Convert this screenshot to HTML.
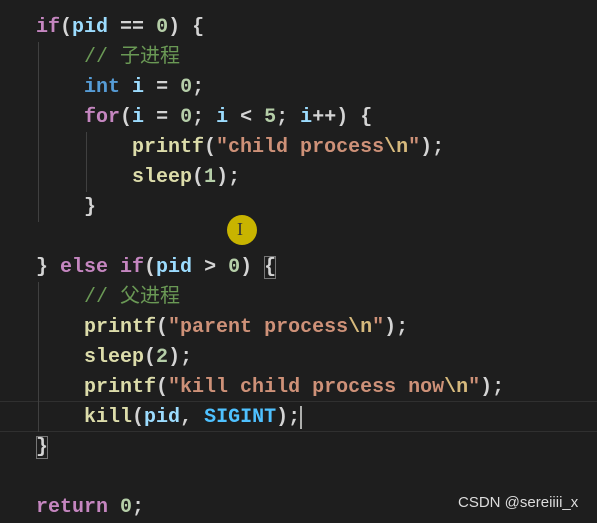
<!DOCTYPE html>
<html><head><style>
body{margin:0;width:597px;height:522px;background:#1e1e1e;overflow:hidden;position:relative;font-family:"Liberation Mono","Noto Sans CJK SC",monospace;font-size:20px;font-weight:bold}
.l{position:absolute;left:36px;height:30px;line-height:30px;white-space:pre;color:#d4d4d4;margin-top:2px}
.k{color:#c586c0}.t{color:#569cd6}.v{color:#9cdcfe}.n{color:#b5cea8}.f{color:#dcdcaa}.s{color:#ce9178}.e{color:#d7ba7d}.c{color:#6a9955;font-weight:normal}.m{color:#4fc1ff}
.g{position:absolute;width:1px;background:#404040}
</style></head><body>
<div style="position:absolute;left:0;right:0;top:401px;height:29px;border-top:1px solid #303030;border-bottom:1px solid #303030"></div>
<div class="g" style="left:38px;top:42px;height:180px"></div>
<div class="g" style="left:86px;top:132px;height:60px"></div>
<div class="g" style="left:38px;top:282px;height:150px"></div>
<div class="l" style="top:11px"><span class="k">if</span>(<span class="v">pid</span> == <span class="n">0</span>) {</div>
<div class="l" style="top:41px">    <span class="c">// 子进程</span></div>
<div class="l" style="top:71px">    <span class="t">int</span> <span class="v">i</span> = <span class="n">0</span>;</div>
<div class="l" style="top:101px">    <span class="k">for</span>(<span class="v">i</span> = <span class="n">0</span>; <span class="v">i</span> &lt; <span class="n">5</span>; <span class="v">i</span>++) {</div>
<div class="l" style="top:131px">        <span class="f">printf</span>(<span class="s">"child process</span><span class="e">\n</span><span class="s">"</span>);</div>
<div class="l" style="top:161px">        <span class="f">sleep</span>(<span class="n">1</span>);</div>
<div class="l" style="top:191px">    }</div>
<div class="l" style="top:251px">} <span class="k">else if</span>(<span class="v">pid</span> &gt; <span class="n">0</span>) <span style="outline:1px solid #777;outline-offset:-1px">{</span></div>
<div class="l" style="top:281px">    <span class="c">// 父进程</span></div>
<div class="l" style="top:311px">    <span class="f">printf</span>(<span class="s">"parent process</span><span class="e">\n</span><span class="s">"</span>);</div>
<div class="l" style="top:341px">    <span class="f">sleep</span>(<span class="n">2</span>);</div>
<div class="l" style="top:371px">    <span class="f">printf</span>(<span class="s">"kill child process now</span><span class="e">\n</span><span class="s">"</span>);</div>
<div class="l" style="top:401px">    <span class="f">kill</span>(<span class="v">pid</span>, <span class="m">SIGINT</span>);<span style="border-left:2px solid #aeafad"></span></div>
<div class="l" style="top:431px"><span style="outline:1px solid #777;outline-offset:-1px">}</span></div>
<div class="l" style="top:491px"><span class="k">return</span> <span class="n">0</span>;</div>
<div style="position:absolute;left:227px;top:215px;width:30px;height:30px;border-radius:50%;background:#c8b400"></div>
<div style="position:absolute;left:237px;top:219px;font:18px 'Liberation Serif',serif;color:#333">I</div>
<div style="position:absolute;left:458px;top:494px;font:15px 'Liberation Sans',sans-serif;color:#ddd">CSDN @sereiiii_x</div>
</body></html>
